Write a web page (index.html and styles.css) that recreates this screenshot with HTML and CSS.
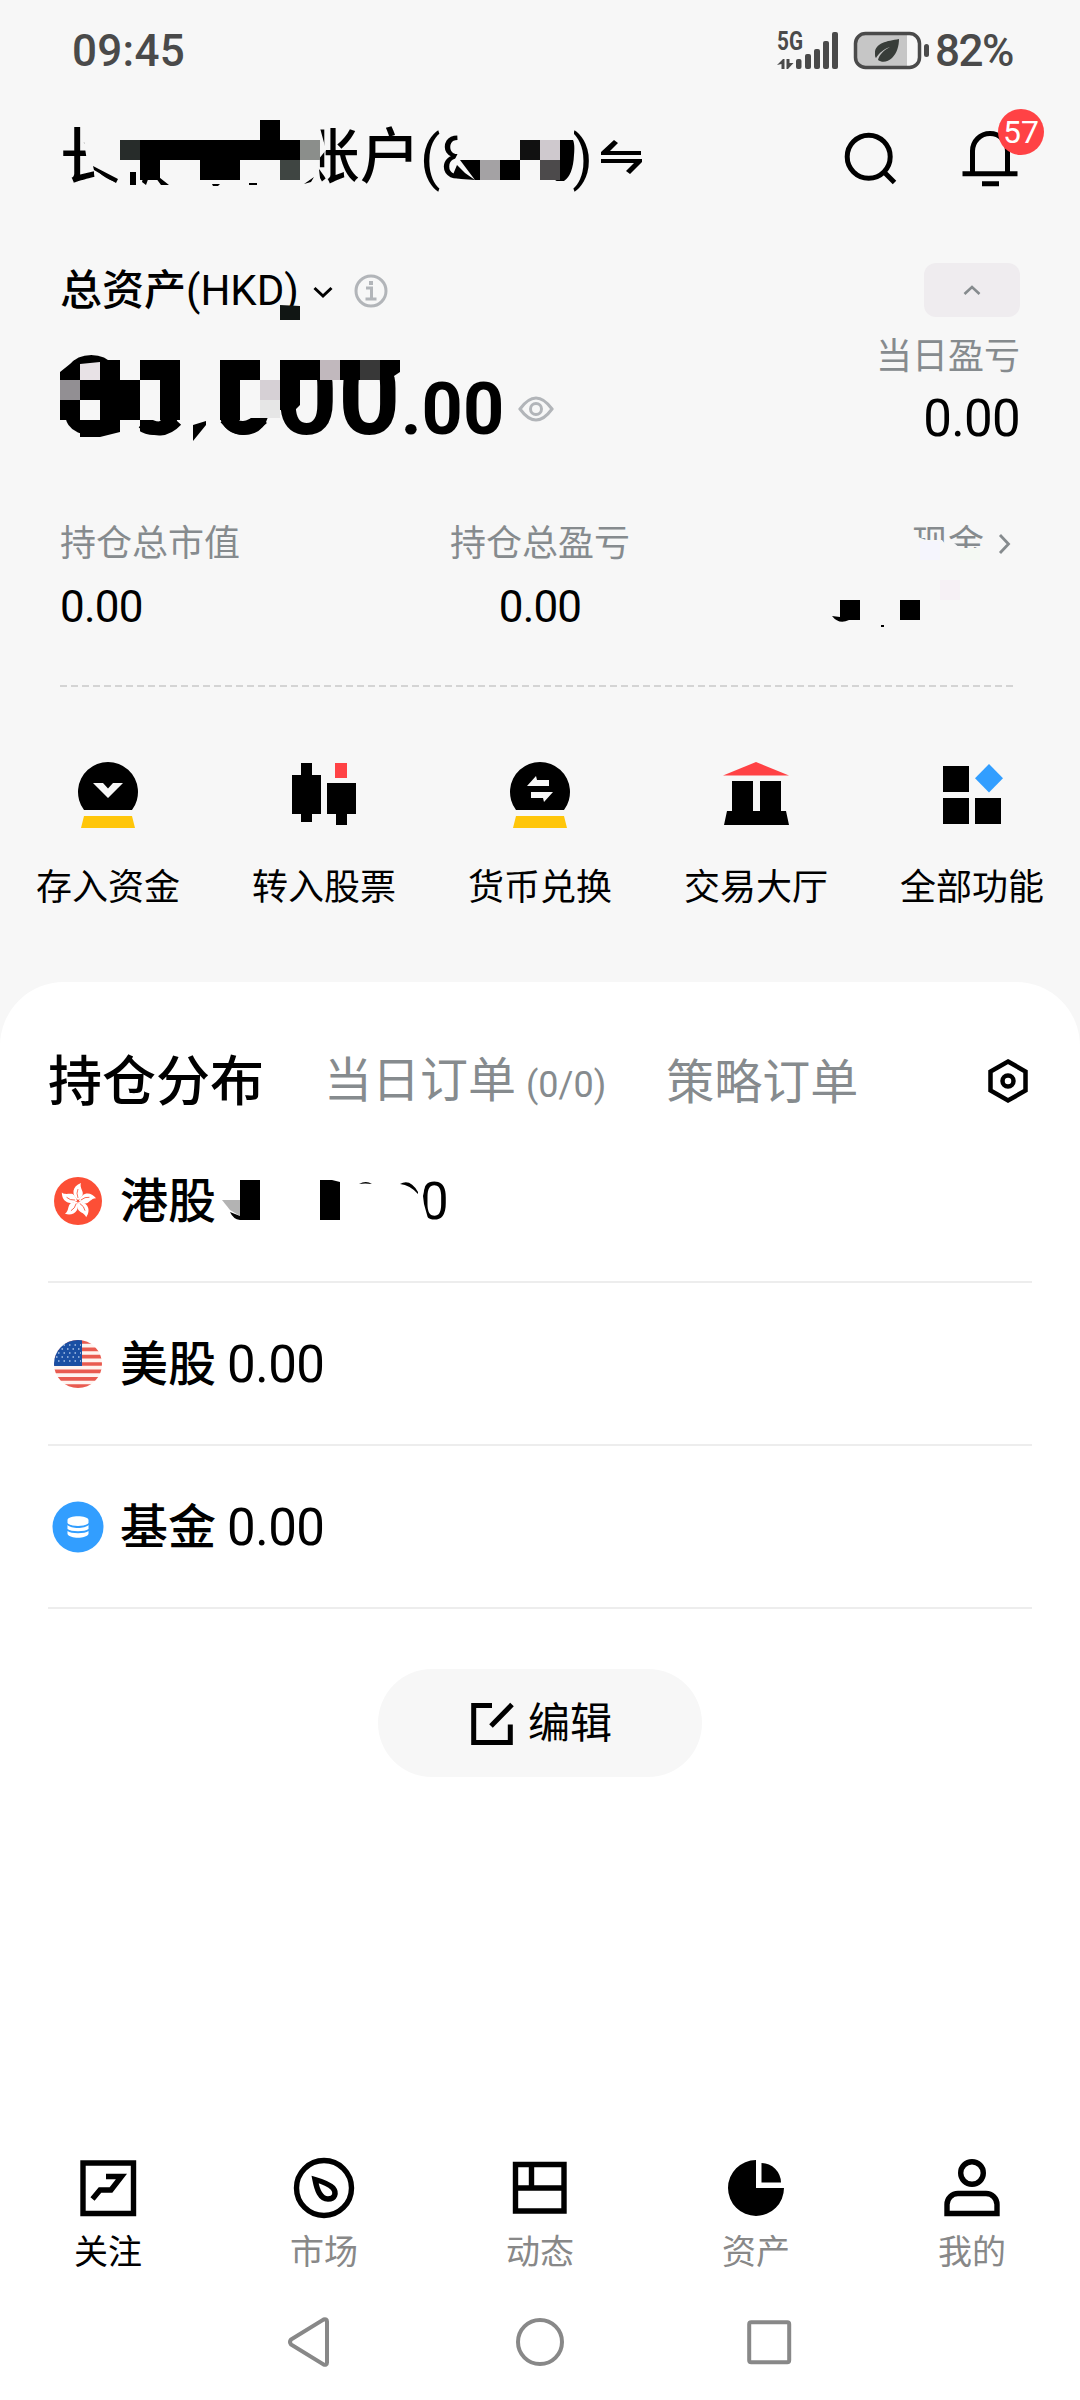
FILE: index.html
```html
<!DOCTYPE html>
<html lang="zh-CN">
<head>
<meta charset="utf-8">
<title>资产</title>
<link rel="stylesheet" href="styles.css">
</head>
<body>
<div class="screen">
  <header class="status">
    <span class="time">09:45</span>
    <svg class="status-icons" viewBox="774 20 158 62">
      <text class="net" x="777" y="50" textLength="26" lengthAdjust="spacingAndGlyphs">5G</text>
      <g fill="#4a4a4a">
        <rect x="796" y="59" width="5.500" height="10" rx="2"/><rect x="805" y="54" width="6" height="15" rx="2"/><rect x="814" y="49" width="6" height="20" rx="2"/><rect x="823" y="41" width="6" height="28" rx="2"/><rect x="832" y="32" width="6" height="37" rx="2"/>
        <path d="M777 65l6-6h1.500v10h-3v-5zM786.500 59h3v4h4l-5.500 6h-1.500z"/>
        <rect x="924" y="44" width="5" height="13" rx="2.500"/>
      </g>
      <path d="M864 34h43v34h-43a8 8 0 0 1-8-8V42a8 8 0 0 1 8-8z" fill="#c6c6c6"/>
      <rect x="855.500" y="33.500" width="64" height="34" rx="10" fill="none" stroke="#4a4a4a" stroke-width="3.500"/>
      <path d="M899 39c-12 2-24 4-24 14 0 3 0 4 1 5 3-5 8-9 14-11-6 3-11 8-12 13 4 3 10 2 14-2 5-5 7-12 7-19z" fill="#383d39"/>
    </svg>
    <span class="battery">82%</span>
  </header>

  <div class="titlebar">
    <div class="account">
      <span>长</span><span class="hidden-name"></span><span>账户<i>(8</i></span><span class="hidden-no"></span><i>)</i>
      <svg class="swap" viewBox="600 138 46 40"><path d="M602 154V152L615 140l4 3-8 8H642v4H602zM643 160v2L631 174l-4-3 8-8H602v-4h41z"/></svg>
      <svg class="mask" viewBox="50 110 540 90">
        <path class="bg" d="M82 128L88 168 92 166 118 183V192H314L320 178 318 160 326 150 320 128V110H82z"/>
        <path d="M93 166l25 13-2 4-22-13zM130 172h6v13h-6zM140 171h11l-5 14-4-3 2-8h-4zM150 170l19 15h-8zM212 184h8l-2 2h-5zM249 183h8v2h-8zM304 184l10-7-3 5z"/>
        <path class="bg" d="M457 128h117v58H468l-9-17-6-6 5-10z"/>
        <path d="M140 140h160v20h-60v20h-40v-20h-40v20h-20zM260 120h20v20h-20zM460 160h20v20h-5zM500 160h20v20h-20zM560 140h13q2 4 1 15-1 20-10 26h-9l5-3zM457 165l8 8 10 7-14-1-9-2z"/>
        <path fill="#272c2a" d="M120 140h20v20h-20z"/><path fill="#8b8e8b" d="M300 140h20v20h-20z"/><path fill="#3f4542" d="M280 160h20v20h-20z"/><path fill="#a4a2a4" d="M480 160h20v20h-20z"/><path fill="#111" d="M520 140h20v20h-20z"/><path fill="#cfc9ce" d="M540 140h20v20h-20z"/><path fill="#4c4a4b" d="M540 160h20v20h-20z"/>
      </svg>
    </div>
    <svg class="search" viewBox="843 129 56 56"><circle cx="868.700" cy="155.700" r="21.500"/><path d="M884 171l10.500 10.500"/></svg>
    <div class="bell">
      <svg viewBox="960 126 60 60"><path d="M972.500 170v-21a17.500 17.500 0 0 1 35 0v21M962.500 171.700h55M982 181.800h17"/></svg>
      <span class="badge">57</span>
    </div>
  </div>

  <section class="summary">
    <div class="total">
      <div class="total-label">
        <span>总资产<i>(HKD)</i></span>
        <svg class="down" viewBox="312 282 22 18"><path d="M314.500 288l8.500 8 8.500-8"/></svg>
        <svg class="info" viewBox="353 273 36 36"><circle cx="371" cy="291" r="15"/><path d="M366 288h5.500v11M365.500 299h11"/><rect x="369" y="281" width="4" height="4"/></svg>
      </div>
      <div class="amount">
        <span class="big">80,000</span><span class="cents">.00</span>
        <svg class="eye" viewBox="517 392 38 32"><path d="M520 408q16-22 32 0-16 22-32 0z"/><circle cx="536" cy="408" r="5.500"/></svg>
      </div>
      <svg class="mask" viewBox="50 300 360 170">
        <path fill="#111614" d="M280 305l20 1v14h-20z"/>
        <path class="bg" d="M112 340h288v20H112zM180 340h40v80h-40zM400 340v31l-6 6V360zM120 420h20v12l-14 3-6 2zM180 425v15l-12-4 10-12zM184 418h36v46h-36z"/>
        <path d="M60 372l15-12h45l20 20v40H120v12l-20 5H80v-17H60zM140 360h40v60h-20v-40h-20zM220 360h40v20h-20v40h-20zM280 360h120v12l-6 4v4H300v25l-5 5h-15zM193 425l13-4v4l-13 16z"/>
        <path class="bg" d="M80 400h20v20H80zM120 360h20v20h-20z"/>
        <path fill="none" stroke="#000" stroke-width="14" d="M226 418q16 20 36 0M143 422q18 14 33-2"/>
        <path class="bg" d="M240 380h40v38h-40zM140 380h20v40h-20zM260 360h20v20h-20z"/>
        <path fill="#928f93" d="M60 380h20v20H60z"/><path fill="#e8e2e6" d="M80 364l20-2v18H80z"/><path fill="#c1b8bd" d="M320 360h20v20h-20z"/><path fill="#383838" d="M360 360h20v20h-20z"/><path fill="#d6d0d5" d="M260 380h20v20h-20z"/><path fill="#e6e6e6" d="M260 400h20v18h-20z"/>
      </svg>
    </div>
    <div class="today">
      <button class="collapse" aria-label="收起"><svg viewBox="0 0 18 12"><path d="M1.500 10L9 3l7.500 7"/></svg></button>
      <span class="caption">当日盈亏</span>
      <span class="value">0.00</span>
    </div>
  </section>

  <section class="stats">
    <div><span class="caption">持仓总市值</span><span class="num">0.00</span></div>
    <div class="mid"><span class="caption">持仓总盈亏</span><span class="num">0.00</span></div>
    <div class="cash"><span class="caption">现金<svg viewBox="0 0 14 22"><path d="M3 2l8.500 9L3 20"/></svg></span>
      <svg class="mask" viewBox="820 510 200 120">
        <path class="bg" d="M910 534l16 6h16l4 5v-2h8l6 5h22v20h-74zM910 534l13 5-5 6-8 5zM950 548h35v20h-35z"/>
        <path fill="#f5f5fd" d="M920 541h20v19h-20z"/><path fill="#f4f9f3" d="M960 549h20v11h-20z"/><path fill="#f6f1f5" d="M940 580h20v20h-20z"/>
        <path d="M840 600h20v20h-11q-10 5-17-4l8 1zM900 600h20v20h-20zM881 625h3v2h-3z"/>
      </svg>
    </div>
  </section>
  <svg class="dash" viewBox="0 0 955 2"><path d="M0 1h955"/></svg>

  <nav class="actions">
    <a><svg viewBox="74 758 68 72"><path d="M84 810a30 30 0 1 1 48 0z"/><path fill="#ffc60a" d="M84 816h48l3 12H81z"/><path fill="#f7f7f7" d="M93 783h10l5 5.500 5-5.500h10l-15 15z"/></svg><span>存入资金</span></a>
    <a><svg viewBox="290 758 68 72"><path d="M301 763h11v12h9v39h-9v8h-11v-8h-9v-39h9zM327 783h29v31h-9v11h-11v-11h-9z"/><path fill="#ff4245" d="M335 763h12v15h-12z"/></svg><span>转入股票</span></a>
    <a><svg viewBox="506 758 68 72"><path d="M516 810a30 30 0 1 1 48 0z"/><path fill="#ffc60a" d="M516 816h48l3 12h-54z"/><path fill="#f7f7f7" d="M527 786l9-10 1 4h12v6zM553 792l-9 10-1-4h-12v-6z"/></svg><span>货币兑换</span></a>
    <a><svg viewBox="722 758 68 72"><path d="M732 781h22v30h6v-30h21v30h5l3 14h-65l3-14h5z"/><path fill="#f7f7f7" d="M753 781h6v30h-6z"/><path fill="#ff4245" d="M756 762l33 13.500h-66z"/></svg><span>交易大厅</span></a>
    <a><svg viewBox="938 758 68 72"><path d="M943 766h26v26h-26zM943 798h26v26h-26zM975 798h26v26h-26z"/><path fill="#329eff" d="M989 764l14 14.300-14 14.300-14-14.300z"/></svg><span>全部功能</span></a>
  </nav>

  <main class="card">
    <div class="tabs">
      <span class="tab on">持仓分布</span>
      <span class="tab t2">当日订单<small>(0/0)</small></span>
      <span class="tab t3">策略订单</span>
      <svg class="hex" viewBox="986 1057 44 48"><path d="M1008 1061.500l17.500 10v19l-17.500 10-17.500-10v-19z"/><circle cx="1008" cy="1081" r="5.500"/></svg>
    </div>
    <ul class="holdings">
      <li>
        <svg class="flag" viewBox="-26 -26 52 52"><circle r="24" fill="#fc4f36"/><defs><g id="petal"><path d="M0-1C-7-6-6-15 3-18c-2 5 4 9 1 13Q2-2 0-1z" fill="#fff"/><path d="M0-3q-2-5 0-9" fill="none" stroke="#fc4f36" stroke-width=".8"/></g></defs><use href="#petal"/><use href="#petal" transform="rotate(72)"/><use href="#petal" transform="rotate(144)"/><use href="#petal" transform="rotate(216)"/><use href="#petal" transform="rotate(288)"/></svg>
        <b>港股</b><span class="held partial">0</span>
        <svg class="mask" viewBox="220 1170 240 60">
          <path class="bg" d="M415 1170h13l-5 26 1 8 5 18h-14z"/>
          <path fill="#b3b3b3" d="M222 1200h18v16l-10-6z"/>
          <path d="M240 1180h20v40h-20q-7-1-10-8l10 4zM320 1180h12l8 2v38h-20zM359 1184q7-4 13 0-7-1-13 0zM400 1184q10-6 18 8v2q-8-9-18-10z"/>
        </svg>
      </li>
      <li>
        <svg class="flag" viewBox="-26 -26 52 52"><clipPath id="disc"><circle r="24"/></clipPath><g clip-path="url(#disc)"><path fill="#fff4f0" d="M-24-24h48v48h-48z"/><path stroke="#e95b50" stroke-width="3.700" d="M-24-22.100h48M-24-14.700h48M-24-7.300h48M-24 0h48M-24 7.400h48M-24 14.800h48M-24 22.200h48"/><path fill="#1a4fa3" d="M-24-24H4V2h-28z"/><path stroke="#a9c3e8" stroke-width="1.500" stroke-dasharray="1.500 4" d="M-20-19H3M-22-15H3M-20-11H3M-22-7H3M-20-3H3"/></g></svg>
        <b>美股</b><span class="held">0.00</span>
      </li>
      <li>
        <svg class="flag" viewBox="-26 -26 52 52"><circle r="25.500" fill="#329eff"/><path fill="#fff" d="M-10.500-7C-10-12 10-12 10.500-7v3C8 0-8 0-10.500-4zM-10.500-2C-7 2 7 2 10.500-2v4C7 5-7 5-10.500 2zM-10.500 4C-7 7 7 7 10.500 4v3C8 12-8 12-10.500 7z"/></svg>
        <b>基金</b><span class="held">0.00</span>
      </li>
    </ul>
    <button class="edit"><svg viewBox="470 1700 44 45"><path d="M492 1704.500h-18.300v37h36.600v-18M491 1725l21-21.500"/></svg><span>编辑</span></button>
  </main>

  <nav class="bottom">
    <a class="on"><svg viewBox="76 2156 64 64"><path d="M83 2163h50.500v50.500H83zM92.500 2199l7.500-9h11l10.500-13.500H106" /></svg><span>关注</span></a>
    <a><svg viewBox="292 2156 64 64"><circle cx="324" cy="2188" r="27.500"/><path d="M315 2179.500c7 2 14 4.500 18 8.500 4 5 2 11-5 11-8 0-11-9-13-19.500z"/></svg><span>市场</span></a>
    <a><svg viewBox="508 2156 64 64"><path d="M515.500 2164.500h48.500v46.500h-48.500zM515.500 2188H564M531.500 2164v24"/></svg><span>动态</span></a>
    <a><svg viewBox="724 2156 64 64" class="solid"><path d="M756 2160v28h28a28 28 0 1 1-28-28zM761.500 2163a20 20 0 0 1 19.500 19.500h-19.500z"/></svg><span>资产</span></a>
    <a><svg viewBox="940 2156 64 64"><circle cx="972" cy="2173" r="11.300"/><path d="M947 2213.500v-9a11 11 0 0 1 11-11h28a11 11 0 0 1 11 11v9z"/></svg><span>我的</span></a>
  </nav>
  <svg class="system" viewBox="0 2300 1080 100"><path d="M291 2339.500q-2 2.500 0 5l32.500 20q3.500 1 3.500-2v-41q0-3-3.500-2z"/><circle cx="540" cy="2342" r="22"/><rect x="749.200" y="2322.200" width="40" height="40" rx="2"/></svg>
</div>
</body>
</html>
```
FILE: styles.css
```css
* { box-sizing: border-box; }
body { margin: 0; background: #f7f7f7; color: #000; font-family: Roboto, "Noto Sans CJK SC", sans-serif; }
svg { display: block; flex: none; }
button { border: 0; padding: 0; font: inherit; color: inherit; }
i { font-style: normal; font-weight: 400; }
.screen { width: 1080px; height: 2400px; display: flex; flex-direction: column; overflow: hidden; }
.mask { position: absolute; }
.bg { fill: #f7f7f7; }
.card .bg { fill: #fff; }

.status { height: 102px; padding: 0 66px 0 72px; display: flex; align-items: center; color: #4a4a4a; font-size: 44px; font-weight: 500; line-height: 104px; }
.time { letter-spacing: .3px; }
.status-icons { width: 158px; height: 62px; margin-left: auto; margin-right: 3px; }
.net { font-size: 25px; font-weight: 700; fill: #4a4a4a; }
.battery { width: 79px; letter-spacing: -1.5px; white-space: nowrap; }

.titlebar { height: 111px; padding-left: 60px; display: flex; align-items: center; }
.account { position: relative; height: 111px; width: 783px; display: flex; align-items: center; font-size: 60px; font-weight: 500; line-height: 111px; white-space: nowrap; }
.account .mask { left: -10px; top: 8px; width: 540px; height: 90px; }
.hidden-name { width: 180px; }
.hidden-no { width: 98px; }
.swap { width: 46px; height: 40px; margin-left: 6px; }
.search, .bell svg { fill: none; stroke: #000; stroke-width: 5; }
.search { width: 56px; height: 56px; }
.bell { position: relative; margin-left: 61px; width: 60px; height: 60px; }
.bell svg { width: 60px; height: 60px; }
.badge { position: absolute; left: 38px; top: -19px; width: 46px; height: 46px; border-radius: 50%; background: #ff4245; color: #fff; font-size: 32px; line-height: 47px; text-align: center; }

.summary { height: 267px; padding: 50px 60px 0; display: flex; justify-content: space-between; }
.total { position: relative; }
.total-label { height: 56px; display: flex; align-items: center; font-size: 42px; font-weight: 500; line-height: 56px; white-space: nowrap; }
.down { width: 22px; height: 18px; margin-left: 13px; fill: none; stroke: #000; stroke-width: 3; }
.info { width: 36px; height: 36px; margin-left: 19px; fill: none; stroke: #b2b5b9; stroke-width: 3; }
.info rect { fill: #b2b5b9; stroke: none; }
.amount { height: 130px; padding-top: 13px; display: flex; align-items: baseline; font-weight: 700; line-height: 130px; }
.big { font-size: 109px; letter-spacing: .2px; }
.cents { font-size: 72px; margin-left: 0; }
.eye { width: 38px; height: 32px; margin-left: 13px; align-self: center; margin-top: 36px; fill: none; stroke: #b2b5b9; stroke-width: 3; }
.total .mask { left: -10px; top: 37px; width: 360px; height: 170px; }
.today { display: flex; flex-direction: column; align-items: flex-end; }
.collapse { width: 96px; height: 54px; border-radius: 12px; background: #efecef; display: grid; place-items: center; }
.collapse svg { width: 18px; height: 12px; fill: none; stroke: #868b8e; stroke-width: 2.6; }
.caption { font-size: 36px; line-height: 52px; color: #868b8e; white-space: nowrap; }
.today .caption { margin-top: 14px; }
.value { font-size: 51px; line-height: 60px; margin-top: 6px; letter-spacing: -.7px; }

.stats { height: 205px; padding: 38px 60px 0; display: grid; grid-template-columns: 320px 320px 320px; }
.stats > div { display: flex; flex-direction: column; gap: 11px; }
.stats .mid { align-items: center; }
.num { font-size: 44px; line-height: 52px; letter-spacing: -.8px; }
.stats .cash { position: relative; align-items: flex-end; }
.cash .caption { display: flex; align-items: center; gap: 13px; padding-right: 9px; }
.cash .caption svg { width: 14px; height: 22px; fill: none; stroke: #868b8e; stroke-width: 2.8; }
.cash .mask { left: 120px; top: -8px; width: 200px; height: 120px; }
.dash { width: 955px; height: 2px; margin-left: 60px; stroke: #d4d4d4; stroke-width: 2; stroke-dasharray: 7 4; }

.actions { height: 295px; padding-top: 71px; display: grid; grid-template-columns: repeat(5, 1fr); }
.actions a { display: flex; flex-direction: column; align-items: center; font-size: 36px; line-height: 52px; }
.actions svg { width: 68px; height: 72px; margin-bottom: 32px; }

.card { height: 1158px; border-radius: 64px 64px 0 0; background: #fff; padding: 0 48px; }
.tabs { height: 138px; padding-top: 60px; display: flex; align-items: center; line-height: 78px; white-space: nowrap; }
.tab { font-size: 48px; color: #868b8e; padding-top: 4px; }
.tab.on { font-size: 54px; font-weight: 500; color: #000; }
.t2 { margin-left: 60px; }
.t2 small { font-size: 36px; margin-left: 10px; }
.t3 { margin-left: 60px; }
.hex { width: 44px; height: 48px; margin: 0 2px 0 auto; fill: none; stroke: #000; stroke-width: 4.5; }
.holdings { list-style: none; margin: 0; padding: 0; }
.holdings li { position: relative; height: 163px; border-bottom: 2px solid #ededed; display: flex; align-items: center; font-size: 48px; font-weight: 500; line-height: 70px; }
.holdings b { font-weight: 500; margin-left: 16px; padding-top: 3px; }
.flag { width: 52px; height: 52px; margin-left: 4px; }
.held { font-size: 51px; font-weight: 400; letter-spacing: -.5px; margin-left: 11px; padding-top: 2px; }
.partial { margin-left: 204px; }
.holdings .mask { left: 172px; top: 50px; width: 240px; height: 60px; }
.edit { width: 324px; height: 108px; margin: 60px auto 0; border-radius: 54px; background: #f7f7f7; display: flex; align-items: center; justify-content: center; gap: 14px; font-size: 42px; line-height: 60px; }
.edit span { padding-top: 2px; }
.edit svg { width: 44px; height: 45px; margin-left: 2px; fill: none; stroke: #000; stroke-width: 5; }

.bottom { height: 160px; padding-top: 16px; background: #fff; display: grid; grid-template-columns: repeat(5, 1fr); }
.bottom a { display: flex; flex-direction: column; align-items: center; font-size: 34px; line-height: 50px; color: #888; }
.bottom .on { color: #000; }
.bottom svg { width: 64px; height: 64px; margin-bottom: 7px; fill: none; stroke: #000; stroke-width: 5.4; }
.bottom .solid { fill: #000; stroke: none; }
.system { width: 1080px; height: 100px; background: #fff; fill: none; stroke: #888; stroke-width: 4; }
```
